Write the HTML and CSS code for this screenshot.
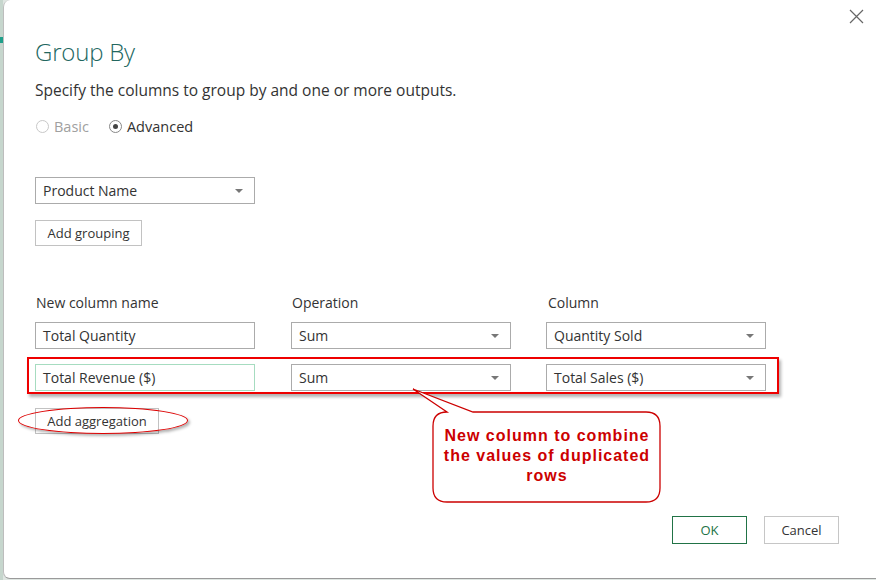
FILE: index.html
```html
<!DOCTYPE html>
<html>
<head>
<meta charset="utf-8">
<link rel="stylesheet" href="styles.css">
</head>
<body>
<div class="page">
  <div class="strip"><div class="strip-mark"></div></div>
  <div class="dialog">
    <button class="close" aria-label="Close">
      <svg width="15" height="15" viewBox="0 0 15 15"><path d="M1 1 L14 14 M14 1 L1 14" stroke="#666" stroke-width="1.2" fill="none"/></svg>
    </button>
    <div class="content">
      <h1 class="title">Group By</h1>
      <p class="subtitle">Specify the columns to group by and one or more outputs.</p>
      <div class="radios">
        <label class="radio disabled"><span class="dot"></span>Basic</label>
        <label class="radio checked"><span class="dot"></span>Advanced</label>
      </div>
      <div class="select wide-first"><span>Product Name</span><i class="caret"></i></div>
      <button class="btn add-grouping">Add grouping</button>

      <div class="grid labels">
        <div>New column name</div>
        <div>Operation</div>
        <div>Column</div>
      </div>
      <div class="grid row">
        <div class="input">Total Quantity</div>
        <div class="select"><span>Sum</span><i class="caret"></i></div>
        <div class="select"><span>Quantity Sold</span><i class="caret"></i></div>
      </div>
      <div class="grid row row2">
        <div class="input focused">Total Revenue ($)</div>
        <div class="select"><span>Sum</span><i class="caret"></i></div>
        <div class="select"><span>Total Sales ($)</span><i class="caret"></i></div>
      </div>
      <button class="btn add-agg">Add aggregation</button>

      <div class="footer">
        <button class="btn ok">OK</button>
        <button class="btn cancel">Cancel</button>
      </div>
    </div>

    <div class="hl-rect"></div>
    <div class="hl-ellipse"></div>
    <svg class="callout-shape" width="260" height="120" viewBox="0 0 260 120">
      <path d="M42 24 L8 1 L68 24 L241 24 Q255 24 255 38 L255 100 Q255 114 241 114 L42 114 Q28 114 28 100 L28 38 Q28 24 42 24 Z" fill="#fff" stroke="#cc0000" stroke-width="1.3"/>
    </svg>
    <div class="callout-text">New column to combine<br>the values of duplicated<br>rows</div>
  </div>
</div>
</body>
</html>
```
FILE: styles.css
```css
* { box-sizing: border-box; }
html, body { margin: 0; padding: 0; background: #fff; }
body { width: 876px; height: 580px; overflow: hidden; font-family: "Open Sans", "Noto Sans", sans-serif; color: #333; }

.page { display: flex; height: 580px; background: #dfe6e2; }
.strip { width: 3px; background: #c6d6cd; position: relative; }
.strip-mark { margin-top: 37px; height: 6px; background: #1f9f8a; }

.dialog {
  flex: 1;
  height: 579px;
  background: #fff;
  border-left: 1px solid #bdbdbd;
  border-bottom: 1px solid #9a9a9a;
  border-radius: 7px 0 0 7px;
  position: relative;
}

.close {
  position: absolute; top: 9px; right: 12px;
  width: 15px; height: 15px; padding: 0; border: 0; background: none; display: block;
}
.close svg { display: block; }

.content { padding: 36px 37px 0 31px; }

.title { margin: 0; font-weight: 300; font-size: 24px; line-height: 32px; color: #22675f; letter-spacing: -0.2px; }
.subtitle { margin: 12px 0 0; font-size: 15.5px; line-height: 20px; color: #333; }

.radios { display: flex; gap: 20px; margin-top: 16px; height: 20px; align-items: center; font-size: 14.5px; padding-left: 1px; }
.radio { display: flex; align-items: center; gap: 5px; }
.radio .dot { width: 13px; height: 13px; border-radius: 50%; border: 1px solid #c8c8c8; display: inline-block; position: relative; }
.radio.disabled { color: #a0a0a0; }
.radio.checked .dot { border-color: #888; }
.radio.checked .dot::after { content: ""; position: absolute; left: 3px; top: 3px; width: 5px; height: 5px; border-radius: 50%; background: #444; }

.select, .input {
  width: 220px; height: 27px;
  border: 1px solid #ababab;
  display: flex; align-items: center; justify-content: space-between;
  padding: 0 11px 0 7px;
  font-size: 14px; color: #333; background: #fff;
}
.wide-first { margin-top: 41px; }
.caret { width: 0; height: 0; border-left: 4px solid transparent; border-right: 4px solid transparent; border-top: 4px solid #777; }
.input.focused { border-color: #a6dcc0; }

.btn {
  font-family: "Open Sans", "Noto Sans", sans-serif;
  font-size: 13px; color: #333;
  background: #fff; border: 1px solid #c2c2c2;
  height: 26px; padding: 0; display: block;
}
.add-grouping { margin-top: 16px; width: 107px; }
.add-agg { margin-top: 17px; width: 124px; }

.grid { display: grid; grid-template-columns: 220px 220px 220px; column-gap: 36px; }
.labels { margin-top: 47px; font-size: 14px; line-height: 20px; }
.labels div { padding-left: 1px; }
.row { margin-top: 9px; }
.row2 { margin-top: 15px; }
.row > :nth-child(3) { margin-left: -1px; }

.footer { display: flex; justify-content: flex-end; gap: 17px; margin-top: 82px; }
.ok, .cancel { width: 75px; height: 28px; font-size: 13px; }
.ok { border: 1px solid #217346; color: #217346; }
.cancel { border: 1px solid #c6c6c6; }

.hl-rect {
  position: absolute; left: 23px; top: 357px; width: 752px; height: 37px;
  border: 2px solid #ee0000;
  box-shadow: 2px 3px 3px rgba(0,0,0,0.3);
}
.hl-ellipse {
  position: absolute; left: 14px; top: 407px; width: 170px; height: 27px;
  border: 1.5px solid #dd0000; border-radius: 50%;
  box-shadow: 2px 2px 3px rgba(0,0,0,0.3);
}
.callout-shape { position: absolute; left: 401px; top: 388px; overflow: visible; }
.callout-text {
  position: absolute; left: 430px; top: 426px; width: 226px;
  text-align: center;
  font-family: "Liberation Sans", Arial, sans-serif; font-weight: bold;
  font-size: 16px; line-height: 20px; letter-spacing: 1px;
  color: #cc0000;
}
```
